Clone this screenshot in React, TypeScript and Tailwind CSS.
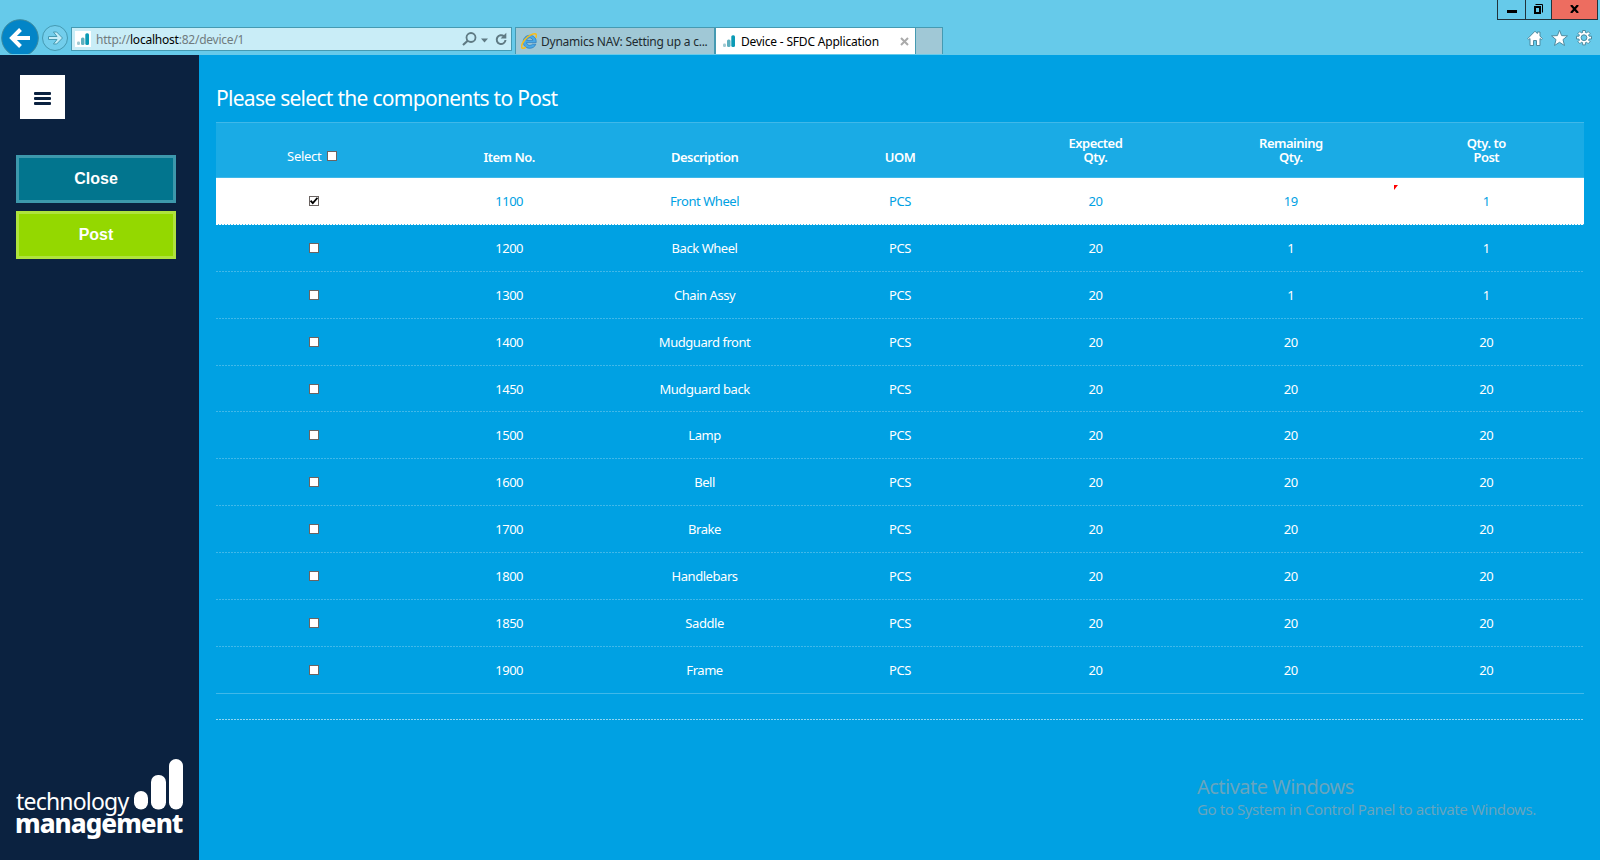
import React from "react";

type Component = {
  no: string;
  description: string;
  uom: string;
  expected: number;
  remaining: number;
  toPost: number;
  selected?: boolean;
};

const components: Component[] = [
  { no: "1100", description: "Front Wheel", uom: "PCS", expected: 20, remaining: 19, toPost: 1, selected: true },
  { no: "1200", description: "Back Wheel", uom: "PCS", expected: 20, remaining: 1, toPost: 1 },
  { no: "1300", description: "Chain Assy", uom: "PCS", expected: 20, remaining: 1, toPost: 1 },
  { no: "1400", description: "Mudguard front", uom: "PCS", expected: 20, remaining: 20, toPost: 20 },
  { no: "1450", description: "Mudguard back", uom: "PCS", expected: 20, remaining: 20, toPost: 20 },
  { no: "1500", description: "Lamp", uom: "PCS", expected: 20, remaining: 20, toPost: 20 },
  { no: "1600", description: "Bell", uom: "PCS", expected: 20, remaining: 20, toPost: 20 },
  { no: "1700", description: "Brake", uom: "PCS", expected: 20, remaining: 20, toPost: 20 },
  { no: "1800", description: "Handlebars", uom: "PCS", expected: 20, remaining: 20, toPost: 20 },
  { no: "1850", description: "Saddle", uom: "PCS", expected: 20, remaining: 20, toPost: 20 },
  { no: "1900", description: "Frame", uom: "PCS", expected: 20, remaining: 20, toPost: 20 },
];

function SignalIcon() {
  return (
    <svg width="12" height="12" viewBox="0 0 12 12" className="shrink-0">
      <rect x="0" y="8.5" width="3" height="3.5" rx="1.2" fill="#9fc9d2" />
      <rect x="4" y="4.5" width="3.5" height="7.5" rx="1.5" fill="#5fb0bf" />
      <rect x="8.3" y="0.3" width="3.7" height="11.7" rx="1.5" fill="#0b9ab5" />
    </svg>
  );
}

function ExplorerIcon() {
  return (
    <svg width="16" height="16" viewBox="0 0 16 16" className="shrink-0">
      <path
        d="M15.200 9.600H5.600c.2 1.600 1.400 2.700 3.200 2.700 1.200 0 2-.4 2.600-1.100h3.400c-.9 2.500-3.100 4.100-6 4.100-3.900 0-6.600-2.700-6.600-6.400S5 2.300 8.800 2.300s6.400 2.700 6.400 6.300zM5.700 7.300h6.100C11.500 5.800 10.300 4.900 8.700 4.900S6 5.800 5.700 7.300z"
        fill="#4aa9e6"
        stroke="#1c6fb4"
        strokeWidth=".6"
      />
      <path d="M5 14.200c-1.800 1.200-3.200 1.500-3.900.8C-.5 13.300 2.200 7.600 6.600 4 10.400 1 14.400 0 15.200 1.500c.5 1 .1 2.200-.5 3.300" fill="none" stroke="#f7bd1c" strokeWidth="1.600" />
    </svg>
  );
}

function BrowserBar() {
  return (
    <header className="flex h-[55px] w-full bg-[#66caea]">
      <div className="flex w-[513px] pl-[1px] pt-[19px]">
        <svg width="70" height="35" viewBox="0 0 70 35" className="shrink-0">
          <circle cx="19" cy="19" r="18.300" fill="#0385c7" stroke="#3d8ba0" strokeWidth="1" />
          <path d="M29 19H11.500M19.500 10.500L11 19l8.500 8.500" fill="none" stroke="#fff" strokeWidth="4" />
          <circle cx="54" cy="19" r="12.500" fill="#7fd2ed" fillOpacity=".5" stroke="#459ab2" strokeWidth="1" />
          <path d="M47.500 17.500h8.500l-3.600-4.500h3.300l5.800 6-5.800 6h-3.300l3.600-4.500h-8.500z" fill="#c5edf8" stroke="#459ab2" strokeWidth="1" />
        </svg>
        <div className="mt-2 flex h-6 w-[441px] items-center border border-[#459ab2] bg-[#c9edf7] pl-[3px]">
          <span className="flex h-4 w-4 items-center justify-center bg-white">
            <SignalIcon />
          </span>
          <span className="ml-[5px] pt-[2px] font-['Noto_Sans'] text-[12px] leading-4 tracking-[-0.23px] text-[#707b7e]">
            http://<span className="text-black">localhost</span>:82/device/1
          </span>
          <svg width="50" height="20" viewBox="0 0 50 20" className="ml-auto mr-[2px]">
            <circle cx="12" cy="8.500" r="4.500" fill="none" stroke="#5f7a83" strokeWidth="1.800" />
            <path d="M8.700 11.800L4 16" stroke="#5f7a83" strokeWidth="2.200" />
            <path d="M22 9.500h7l-3.500 4z" fill="#5f7a83" />
            <path d="M45 7.300A4.400 4.400 0 1 0 46.500 11" fill="none" stroke="#5f7a83" strokeWidth="2" />
            <path d="M47.300 3.800v5.700h-5.700z" fill="#5f7a83" />
          </svg>
        </div>
      </div>
      <div className="flex h-[27px] self-start pl-[2px] pt-[27px] font-['Noto_Sans'] text-[12px] leading-4">
        <div className="flex h-[27px] w-[200px] items-center border border-b-0 border-[#459ab2] bg-[#a0c8d6] pl-[5px] text-[#202b2f]">
          <ExplorerIcon />
          <span className="ml-1 pt-[2px] tracking-[-0.24px]">Dynamics NAV: Setting up a c...</span>
        </div>
        <div className="flex h-[27px] w-[201px] items-center border border-b-0 border-[#459ab2] bg-white pl-[7px] text-black">
          <SignalIcon />
          <span className="ml-[6px] pt-[2px] tracking-[-0.19px]">Device - SFDC Application</span>
          <svg width="9" height="9" viewBox="0 0 9 9" className="ml-auto mr-[6px]">
            <path d="M1 1l7 7M8 1L1 8" stroke="#aaa" strokeWidth="2" />
          </svg>
        </div>
        <div className="h-[27px] w-[27px] border border-b-0 border-l-0 border-[#459ab2] bg-[#a0c8d6]" />
      </div>
      <div className="ml-auto flex w-[103px] flex-col">
        <div className="flex h-5 w-[101px] border border-t-0 border-[#21333b]">
          <div className="flex w-[28px] justify-center border-r border-[#21333b]">
            <span className="mt-[10px] h-[3px] w-[10px] bg-black" />
          </div>
          <div className="flex w-[26px] justify-center border-r border-[#21333b]">
            <svg width="11" height="11" viewBox="0 0 11 11" className="mt-1">
              <path d="M2 3h5v6H2z" fill="none" stroke="#000" strokeWidth="2" />
              <path d="M2.500.5h7v8" fill="none" stroke="#000" />
            </svg>
          </div>
          <div className="flex flex-1 justify-center bg-[#ed6d60]">
            <svg width="9" height="8" viewBox="0 0 9 8" className="mt-[5px]">
              <path d="M1 0l7 8M8 0L1 8" stroke="#000" strokeWidth="2.200" />
            </svg>
          </div>
        </div>
        <svg width="66" height="18" viewBox="0 0 66 18" className="ml-[30px] mt-[9px]" fill="#fff" stroke="#4c8ba0" strokeWidth="1">
          <path d="M.8 9.500L8 2.200l2.300 2.300V3h2.700v4.200l2.400 2.300-1 1.200-1.400-1.200v7H9.500v-5h-3v5H3v-7l-1.200 1.200z" />
          <path d="M32.500 1.200l2.100 5.400 5.900.3-4.500 3.700 1.500 5.900-5-3.200-5 3.200 1.500-5.900-4.500-3.700 5.900-.3z" />
          <path
            d="M55.600 1.500h2.800v2l1.200.5 1.500-1.500 2 2-1.500 1.500.5 1.200h2.400v2.800h-2.400l-.5 1.200 1.500 1.500-2 2-1.500-1.500-1.200.5v2.200h-2.800v-2.200l-1.200-.5-1.500 1.500-2-2 1.500-1.500-.5-1.200h-2.400V7.200h2.400l.5-1.200-1.500-1.500 2-2L54.400 4l1.200-.5z"
          />
          <circle cx="57" cy="8.700" r="2.900" fill="#66caea" />
        </svg>
      </div>
    </header>
  );
}

function Logo() {
  return (
    <div className="relative h-[82px] w-[168px] font-['Noto_Sans'] text-white">
      <svg width="50" height="52" viewBox="0 0 50 52" className="absolute left-[118px] top-0">
        <rect x="0" y="32" width="14" height="18.500" rx="7" fill="#fff" />
        <rect x="17" y="16" width="15" height="34.500" rx="7" fill="#fff" />
        <rect x="35" y="0" width="14" height="50.500" rx="7" fill="#fff" />
      </svg>
      <div className="absolute left-0 top-[31px] text-[23px] leading-[22px] tracking-[-0.8px]">technology</div>
      <div className="absolute -left-[1px] top-[53px] text-[26px] font-extrabold leading-[22px] tracking-[-0.95px]">management</div>
    </div>
  );
}

function Sidebar() {
  return (
    <aside className="flex w-[199px] flex-col bg-[#0b2240] px-4">
      <button className="ml-1 mt-5 flex h-11 w-[45px] flex-col items-center justify-center gap-[2px] bg-white pt-[2px]">
        <span className="h-[3px] w-[17px] rounded-[1px] bg-[#0b2240]" />
        <span className="h-[3px] w-[17px] rounded-[1px] bg-[#0b2240]" />
        <span className="h-[3px] w-[17px] rounded-[1px] bg-[#0b2240]" />
      </button>
      <div className="mt-9 flex w-40 flex-col gap-2 font-['Liberation_Sans'] text-[16px] font-bold leading-5 text-white">
        <button className="h-12 border-[3px] border-[#3d98ac] bg-[#02758e]">Close</button>
        <button className="h-12 border-[3px] border-[#afe33d] bg-[#94d800]">Post</button>
      </div>
      <div className="mt-auto pb-[19px]">
        <Logo />
      </div>
    </aside>
  );
}

function Checkbox({ checked = false }: { checked?: boolean }) {
  return (
    <span className="flex h-[10px] w-[10px] shrink-0 items-center justify-center border border-[#6b6462] bg-white">
      {checked && (
        <svg width="8" height="8" viewBox="0 0 8 8">
          <path d="M.5 3.700l2.300 2.500L7.500.8" fill="none" stroke="#000" strokeWidth="1.800" />
        </svg>
      )}
    </span>
  );
}

const headings = ["Item No.", "Description", "UOM", "Expected\nQty.", "Remaining\nQty.", "Qty. to\nPost"];

function ComponentsTable() {
  return (
    <section className="text-[13px] leading-[14px]">
      <div className="grid h-14 grid-cols-7 items-end border-y border-[#40b8e9] bg-[#1aabe5] pb-[13px] text-center font-semibold tracking-[-0.5px]">
        <div className="flex items-center justify-center gap-[6px] pb-[1px] pr-[3px] font-normal tracking-[-0.3px]">
          Select <Checkbox />
        </div>
        {headings.map((text) => (
          <div key={text} className="whitespace-pre-line">
            {text}
          </div>
        ))}
      </div>
      {components.map((c, i) => (
        <div
          key={c.no}
          className={"flex h-[46.9px] flex-col " + (c.selected ? "text-[#00a1e3]" : "text-white")}
        >
          <div
            className={
              "relative grid flex-1 grid-cols-7 items-center text-center tracking-[-0.45px] " +
              (c.selected ? "bg-white" : "")
            }
          >
            <div className="flex justify-center">
              <Checkbox checked={c.selected} />
            </div>
            <div>{c.no}</div>
            <div>{c.description}</div>
            <div>{c.uom}</div>
            <div>{c.expected}</div>
            <div>{c.remaining}</div>
            <div>{c.toPost}</div>
            {c.selected && (
              <svg width="4" height="5" viewBox="0 0 4 5" className="absolute left-[1178px] top-[7px]">
                <path d="M0 0h4L0 5z" fill="#f00" />
              </svg>
            )}
          </div>
          <div
            className={
              "h-px shrink-0 " +
              (c.selected
                ? "bg-[repeating-linear-gradient(90deg,#fff_0_2px,#40b8e9_2px_3px)]"
                : i === components.length - 1
                  ? "bg-[#40b8e9]"
                  : "bg-[repeating-linear-gradient(90deg,#40b8e9_0_2px,#00a1e3_2px_3px)]")
            }
          />
        </div>
      ))}
      <div className="mt-[25px] h-px bg-[repeating-linear-gradient(90deg,#8ed6f3_0_2px,#00a1e3_2px_3px)]" />
    </section>
  );
}

export default function App() {
  return (
    <div className="flex h-[860px] w-[1600px] flex-col overflow-hidden">
      <BrowserBar />
      <div className="flex flex-1">
        <Sidebar />
        <main className="flex flex-1 flex-col bg-[#00a1e3] pl-[17px] pr-4 font-['Noto_Sans'] text-white">
          <h1 className="mb-[9px] mt-[28px] text-[21px] leading-[30px] tracking-[-0.71px]">Please select the components to Post</h1>
          <ComponentsTable />
          <div className="ml-[981px] mt-[53px] text-[#67a5be]">
            <p className="text-[20px] leading-7 tracking-[-0.53px]">Activate Windows</p>
            <p className="-mt-[2px] text-[15px] leading-5 tracking-[-0.39px]">Go to System in Control Panel to activate Windows.</p>
          </div>
        </main>
      </div>
    </div>
  );
}
